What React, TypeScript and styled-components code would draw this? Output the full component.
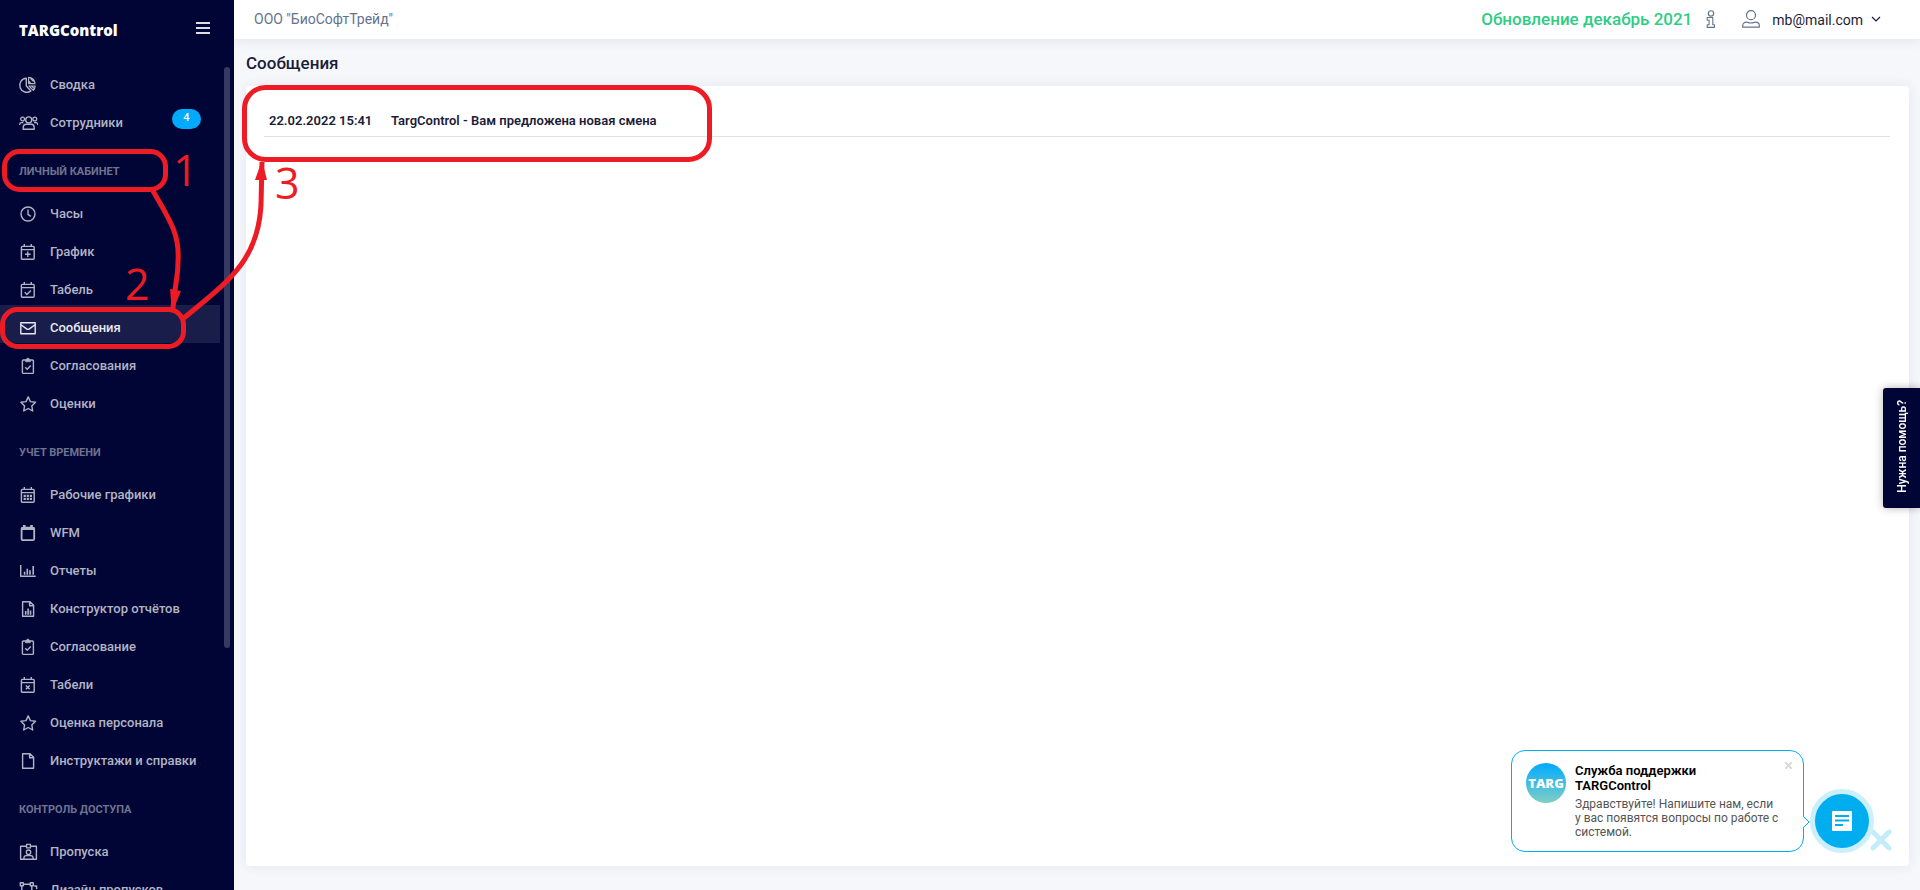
import React from 'react';
import styled, { createGlobalStyle } from 'styled-components';

const GlobalStyle = createGlobalStyle`
  *, *::before, *::after { box-sizing: border-box; }
  body {
    margin: 0;
    background: #f6f7fb;
    color: #1c1c38;
    font-family: Roboto, "Liberation Sans", sans-serif;
    font-size: 14px;
  }
  button { font: inherit; color: inherit; border: 0; padding: 0; background: none; cursor: pointer; }
  a { color: inherit; text-decoration: none; }
`;

const Page = styled.div`
  position: relative;
  display: flex;
  min-height: 100vh;
`;

/* ---------- sidebar ---------- */

const Sidebar = styled.aside`
  position: sticky;
  top: 0;
  flex: 0 0 234px;
  height: 100vh;
  overflow: hidden;
  background: #000536;
  color: #fff;
`;

const SidebarHeader = styled.div`
  display: flex;
  align-items: center;
  justify-content: space-between;
  height: 62px;
  padding: 0 24px 6px 19px;
`;

const Logo = styled.a`
  font-family: "Open Sans", sans-serif;
  font-size: 15px;
  font-weight: 800;
  line-height: 20px;
  padding-top: 4px;
`;

const MenuButton = styled.button`
  display: flex;
`;

const ScrollThumb = styled.div`
  position: absolute;
  top: 67px;
  right: 4px;
  width: 6px;
  height: 581px;
  border-radius: 3px;
  background: #363a62;
`;

const SectionTitle = styled.h2`
  margin: 0;
  padding: 26px 19px 11px;
  font-size: 11px;
  font-weight: 700;
  line-height: 16px;
  text-transform: uppercase;
  color: #70738f;
`;

const NavList = styled.ul`
  list-style: none;
  margin: 0;
  padding: 0;
  width: 220px;
`;

const NavLink = styled.a<{ $active?: boolean }>`
  position: relative;
  display: flex;
  align-items: center;
  gap: 12px;
  height: 38px;
  padding: 8px 18px 0;
  font-size: 13px;
  font-weight: 500;
  line-height: 16px;
  white-space: nowrap;
  color: ${p => (p.$active ? '#e8e9ef' : '#b3b4c3')};
  background: ${p => (p.$active ? '#191d4a' : 'transparent')};
`;

const Badge = styled.span`
  position: absolute;
  top: 9px;
  right: 19px;
  width: 29px;
  height: 20px;
  border-radius: 10px;
  background: #00aaff;
  color: #fff;
  font-size: 11px;
  line-height: 18px;
  text-align: center;
`;

/* ---------- main area ---------- */

const Main = styled.div`
  flex: 1;
  min-width: 0;
  display: flex;
  flex-direction: column;
`;

const TopBar = styled.header`
  display: flex;
  align-items: center;
  height: 39px;
  padding: 0 39px 2px 20px;
  background: #fff;
  box-shadow: 0 0 12px rgba(40, 50, 90, 0.12);
`;

const Company = styled.span`
  flex: 1;
  color: #64748f;
`;

const UpdateLink = styled.a`
  font-size: 17px;
  font-weight: 500;
  line-height: 20px;
  color: #2fcc85;
`;

const InfoButton = styled.button`
  display: flex;
  margin: 0 26px 0 14px;
`;

const UserButton = styled.button`
  display: flex;
  align-items: center;
  gap: 8px;
`;

const UserName = styled.span`
  padding: 2px 0 0 4px;
`;

const Content = styled.main`
  flex: 1;
  display: flex;
  flex-direction: column;
  padding: 12px 11px 24px 12px;
`;

const PageTitle = styled.h1`
  margin: 0 0 11px;
  font-size: 17px;
  font-weight: 500;
  line-height: 24px;
`;

const Card = styled.section`
  flex: 1;
  padding: 20px 19px 20px 18px;
  border-radius: 4px;
  background: #fff;
  box-shadow: 0 0 12px rgba(40, 50, 90, 0.09);
`;

const MessageTable = styled.table`
  width: 100%;
  border-collapse: collapse;
  font-size: 13px;
  font-weight: 600;
  line-height: 16px;

  td {
    padding: 7px 0 7px 5px;
    border-bottom: 1px solid #e6e0e4;
  }
  td:first-child { width: 122px; }
`;

/* ---------- floating widgets ---------- */

const HelpTab = styled.button`
  position: fixed;
  right: 0;
  top: 388px;
  width: 37px;
  height: 120px;
  border-radius: 3px 0 0 3px;
  background: #000536;
  color: #fff;
  box-shadow: 0 0 8px rgba(0, 0, 0, 0.3);
  font-size: 12px;
  font-weight: 500;

  span { writing-mode: vertical-rl; rotate: 180deg; }
`;

const ChatCard = styled.aside`
  position: fixed;
  right: 116px;
  bottom: 38px;
  display: flex;
  gap: 9px;
  width: 293px;
  height: 102px;
  padding: 12px 14px;
  border: 1px solid #00adef;
  border-radius: 14px;
  background: #fff;
`;

const ChatTail = styled.svg`
  position: absolute;
  right: -7px;
  top: 65px;
`;

const Avatar = styled.div`
  flex: 0 0 40px;
  height: 40px;
  border-radius: 50%;
  background: linear-gradient(#00aaff, #7fcfc4);
  color: #fff;
  font-family: "Open Sans", sans-serif;
  font-size: 13px;
  font-weight: 800;
  line-height: 40px;
  text-align: center;
`;

const ChatTitle = styled.h3`
  margin: 0 0 4px;
  font-size: 13px;
  font-weight: 600;
  line-height: 15px;
  color: #000;
  width: 150px;
`;

const ChatText = styled.p`
  margin: 0;
  font-size: 12px;
  line-height: 14px;
  color: #555;
  width: 212px;
`;

const ChatClose = styled.button`
  position: absolute;
  top: 11px;
  right: 11px;
  display: flex;
`;

const ChatButton = styled.button`
  position: fixed;
  right: 46px;
  bottom: 37px;
  display: flex;
  align-items: center;
  justify-content: center;
  width: 64px;
  height: 64px;
  border: 5px solid #cceffc;
  border-radius: 50%;
  background: #00adef;
`;

const WidgetClose = styled.button`
  position: fixed;
  right: 28px;
  bottom: 39px;
  display: flex;
`;

const Annotations = styled.svg`
  position: absolute;
  left: 0;
  top: 0;
  pointer-events: none;
  font-family: "Open Sans", sans-serif;
  font-size: 43px;
`;

/* ---------- icons ---------- */

const Icon = ({ children }: { children: React.ReactNode }) => (
  <svg width="20" height="20" viewBox="0 0 20 20" fill="none" stroke="currentColor" strokeWidth="1.4" strokeLinejoin="round" aria-hidden="true">
    {children}
  </svg>
);

const calendarFrame = (
  <>
    <rect x="3.4" y="4.4" width="12.8" height="12.8" rx="1" />
    <path d="M3.4 7.6h12.8M6.3 2v2.4M13.3 2v2.4" />
  </>
);
const clipboardFrame = (
  <>
    <rect x="4.4" y="4" width="11" height="13.4" rx="1" />
    <path d="M7.4 4.6c0-1 1-.8 1.2-1.6.3-1.3 2.3-1.3 2.6 0 .2.8 1.2.6 1.2 1.600v1.200h-5z" fill="currentColor" strokeWidth="0.6" />
  </>
);
const fileFrame = <path d="M4.6 2.7h7.4l3.6 3.6v11H4.600zM11.6 2.9v3.8h3.8" />;

const icons = {
  pie: (
    <Icon>
      <path d="M8.3 3.3a7 7 0 1 0 4.6 12.6L8.3 11z" />
      <path d="M10.6 2.3v6.4h6.4a6.4 6.4 0 0 0-6.4-6.4zM12.6 3.5l3 3M10.6 6l2.6 2.6" strokeWidth="1.2" />
      <path d="M11 11h6.2a7 7 0 0 1-1.9 4.300zM13.600 11l2.400 2.400" strokeWidth="1.2" />
    </Icon>
  ),
  people: (
    <Icon>
      <circle cx="10.7" cy="6.9" r="3" />
      <circle cx="4.6" cy="6" r="1.9" strokeWidth="1.3" />
      <circle cx="16.8" cy="6" r="1.9" strokeWidth="1.3" />
      <path d="M5.2 16.2v-1.500c0-2 1.400-3.500 3.200-3.500h4.600c1.800 0 3.200 1.500 3.200 3.500v1.500z" />
      <path d="M1.7 12v-.6c0-1 .8-1.8 1.8-1.8h1.9M19.7 12v-.6c0-1-.8-1.8-1.8-1.8H16" strokeWidth="1.3" />
    </Icon>
  ),
  clock: <Icon><circle cx="10" cy="10" r="7" /><path d="M10 5.6v4.800l2.800 2" /></Icon>,
  calendarPlus: <Icon>{calendarFrame}<path d="M9.8 9.400v5.600M7 12.200h5.600" /></Icon>,
  calendarCheck: <Icon>{calendarFrame}<path d="M6.8 12.300l2.100 2.100 4-4" /></Icon>,
  calendarX: <Icon>{calendarFrame}<path d="M7.9 10.500l3.800 3.800M11.700 10.500l-3.800 3.800" /></Icon>,
  mail: <Icon><path d="M2.8 4.700h14.400v11H2.800zM3 6.700l5.600 4.200c.9.600 1.900.6 2.800 0L17 6.700" /></Icon>,
  clipboard: <Icon>{clipboardFrame}<path d="M7.2 11.200l2 2 3.600-3.700" /></Icon>,
  star: <Icon><path d="M10.2 2.900l2.200 4.700 5.100.7-3.700 3.600.9 5.100-4.500-2.500L5.700 17l.9-5.100-3.700-3.600 5.100-.7z" /></Icon>,
  calendarGrid: (
    <Icon>
      {calendarFrame}
      <path d="M5.600 10.800h2.200M8.700 10.800h2.200M11.800 10.800h2.200M5.600 13.800h2.200M8.700 13.800h2.200M11.800 13.800h2.200" strokeWidth="2.200" />
    </Icon>
  ),
  calendarBlank: (
    <Icon>
      <rect x="3.600" y="4.600" width="12.600" height="12.600" rx="1.400" strokeWidth="1.800" />
      <path d="M3.400 5.800h13M6.300 2v3M13.500 2v3" strokeWidth="2.600" />
    </Icon>
  ),
  chart: (
    <Icon>
      <path d="M2.700 4v11.300h15" />
      <path d="M6.600 10.800v3M9.300 7.800v6M12 9.300v4.500M15.200 5v8.800" strokeWidth="1.600" />
    </Icon>
  ),
  fileChart: <Icon>{fileFrame}<path d="M7.700 12v3.800M10.100 9.500v6.300M12.500 11.500v4.300" strokeWidth="1.600" /></Icon>,
  file: <Icon>{fileFrame}</Icon>,
  pass: (
    <Icon>
      <path d="M8 4.200H2.600v13h15.800v-13H13" />
      <path d="M8.600 2.300h3.800v3.600H8.600zM5.900 17v-1c0-1.400 1-2.300 2.300-2.300h4.600c1.300 0 2.300.9 2.300 2.300v1" strokeWidth="1.300" />
      <circle cx="10.500" cy="10.200" r="2.200" strokeWidth="1.300" />
    </Icon>
  ),
  vector: (
    <Icon>
      <path d="M2.300 2.700h3v3h-3zM12.300 2.700h3v3h-3zM3.800 5.700v9M5.300 4.200h7M2.300 14.700h3v3h-3zM13.800 5.700v9M5.300 16.200h7M16.200 6h2.400v3" />
    </Icon>
  ),
};

/* ---------- data ---------- */

type Item = { label: string; icon: keyof typeof icons; active?: boolean; badge?: number };
const sections: { title?: string; items: Item[] }[] = [
  { items: [{ label: 'Сводка', icon: 'pie' }, { label: 'Сотрудники', icon: 'people', badge: 4 }] },
  {
    title: 'Личный кабинет',
    items: [
      { label: 'Часы', icon: 'clock' },
      { label: 'График', icon: 'calendarPlus' },
      { label: 'Табель', icon: 'calendarCheck' },
      { label: 'Сообщения', icon: 'mail', active: true },
      { label: 'Согласования', icon: 'clipboard' },
      { label: 'Оценки', icon: 'star' },
    ],
  },
  {
    title: 'Учет времени',
    items: [
      { label: 'Рабочие графики', icon: 'calendarGrid' },
      { label: 'WFM', icon: 'calendarBlank' },
      { label: 'Отчеты', icon: 'chart' },
      { label: 'Конструктор отчётов', icon: 'fileChart' },
      { label: 'Согласование', icon: 'clipboard' },
      { label: 'Табели', icon: 'calendarX' },
      { label: 'Оценка персонала', icon: 'star' },
      { label: 'Инструктажи и справки', icon: 'file' },
    ],
  },
  {
    title: 'Контроль доступа',
    items: [{ label: 'Пропуска', icon: 'pass' }, { label: 'Дизайн пропусков', icon: 'vector' }],
  },
];

const messages = [{ date: '22.02.2022 15:41', subject: 'TargControl - Вам предложена новая смена' }];

export default function App() {
  return (
    <Page>
      <GlobalStyle />
      <Sidebar>
        <SidebarHeader>
          <Logo href="#">TARGControl</Logo>
          <MenuButton aria-label="Меню">
            <svg width="14" height="12" stroke="#dcdde6" strokeWidth="2"><path d="M0 1h14M0 6h14M0 11h14" /></svg>
          </MenuButton>
        </SidebarHeader>
        <nav>
          {sections.map((section, i) => (
            <React.Fragment key={i}>
              {section.title && <SectionTitle>{section.title}</SectionTitle>}
              <NavList>
                {section.items.map(item => (
                  <li key={item.label}>
                    <NavLink href="#" $active={item.active}>
                      {icons[item.icon]}
                      {item.label}
                      {item.badge && <Badge>{item.badge}</Badge>}
                    </NavLink>
                  </li>
                ))}
              </NavList>
            </React.Fragment>
          ))}
        </nav>
        <ScrollThumb />
      </Sidebar>

      <Main>
        <TopBar>
          <Company>ООО "БиоСофтТрейд"</Company>
          <UpdateLink href="#">Обновление декабрь 2021</UpdateLink>
          <InfoButton aria-label="Информация">
            <svg width="10" height="18" viewBox="0 0 10 18" fill="none" stroke="#64748f" strokeWidth="1.1" strokeLinejoin="round">
              <circle cx="5" cy="3.4" r="2.7" />
              <path d="M1.2 7.500h5.600v7.200h1.700v2.700h-7.300v-2.700h1.900v-4.500H1.200z" />
            </svg>
          </InfoButton>
          <UserButton>
            <svg width="18" height="18" viewBox="0 0 18 18" fill="none" stroke="#64748f" strokeWidth="1.2" strokeLinejoin="round">
              <circle cx="9" cy="5.2" r="4.500" />
              <path d="M.7 17.200v-1.700c0-2 1.700-3.300 3.700-3.300 1.600 0 2.500.8 4.600.8s3-.8 4.600-.8c2 0 3.700 1.300 3.700 3.300v1.700z" />
            </svg>
            <UserName>mb@mail.com</UserName>
            <svg width="10" height="6" fill="none" stroke="#1c1c38" strokeWidth="1.2"><path d="M1 1l4 4 4-4" /></svg>
          </UserButton>
        </TopBar>
        <Content>
          <PageTitle>Сообщения</PageTitle>
          <Card>
            <MessageTable>
              <tbody>
                {messages.map(m => (
                  <tr key={m.date}>
                    <td>{m.date}</td>
                    <td>{m.subject}</td>
                  </tr>
                ))}
              </tbody>
            </MessageTable>
          </Card>
        </Content>
      </Main>

      <HelpTab><span>Нужна помощь?</span></HelpTab>

      <ChatCard>
        <Avatar>TARG</Avatar>
        <div>
          <ChatTitle>Служба поддержки TARGControl</ChatTitle>
          <ChatText>Здравствуйте! Напишите нам, если у{'\u00a0'}вас появятся вопросы по работе с системой.</ChatText>
        </div>
        <ChatClose aria-label="Закрыть">
          <svg width="7" height="7" stroke="#d8dade" strokeWidth="2"><path d="M0 0l7 7M7 0L0 7" /></svg>
        </ChatClose>
        <ChatTail width="7" height="12" viewBox="0 0 7 12">
          <path d="M0 0v12L6 6z" fill="#fff" />
          <path d="M0 0l6 6-6 6" fill="none" stroke="#00adef" />
        </ChatTail>
      </ChatCard>
      <WidgetClose aria-label="Скрыть чат">
        <svg width="22" height="22" stroke="#c4ecfb" strokeWidth="5" strokeLinecap="round"><path d="M3 3l16 16M19 3L3 19" /></svg>
      </WidgetClose>
      <ChatButton aria-label="Открыть чат">
        <svg width="20" height="20">
          <rect width="20" height="20" rx="1" fill="#fff" />
          <path d="M3 5h14M3 9.500h14M3 14h8" stroke="#00adef" strokeWidth="2" />
        </svg>
      </ChatButton>

      <Annotations width="730" height="360" fill="none" stroke="#ed1c24" strokeWidth="5">
        <rect x="4.5" y="151.5" width="161" height="38" rx="15" />
        <rect x="2.5" y="309.5" width="181" height="37" rx="15" />
        <rect x="244.5" y="87.5" width="465" height="72" rx="21" />
        <path d="M153 191C170 220 180 235 178 262C178 278 174 290 173 308M184 318C226 283 258 262 261 205L262 162" />
        <g fill="#ed1c24" stroke="none">
          <path d="M170 289l11 2-9 22zM262 160l5 20h-12z" />
          <text x="173" y="186">1</text>
          <text x="125" y="300">2</text>
          <text x="275" y="199">3</text>
        </g>
      </Annotations>
    </Page>
  );
}
